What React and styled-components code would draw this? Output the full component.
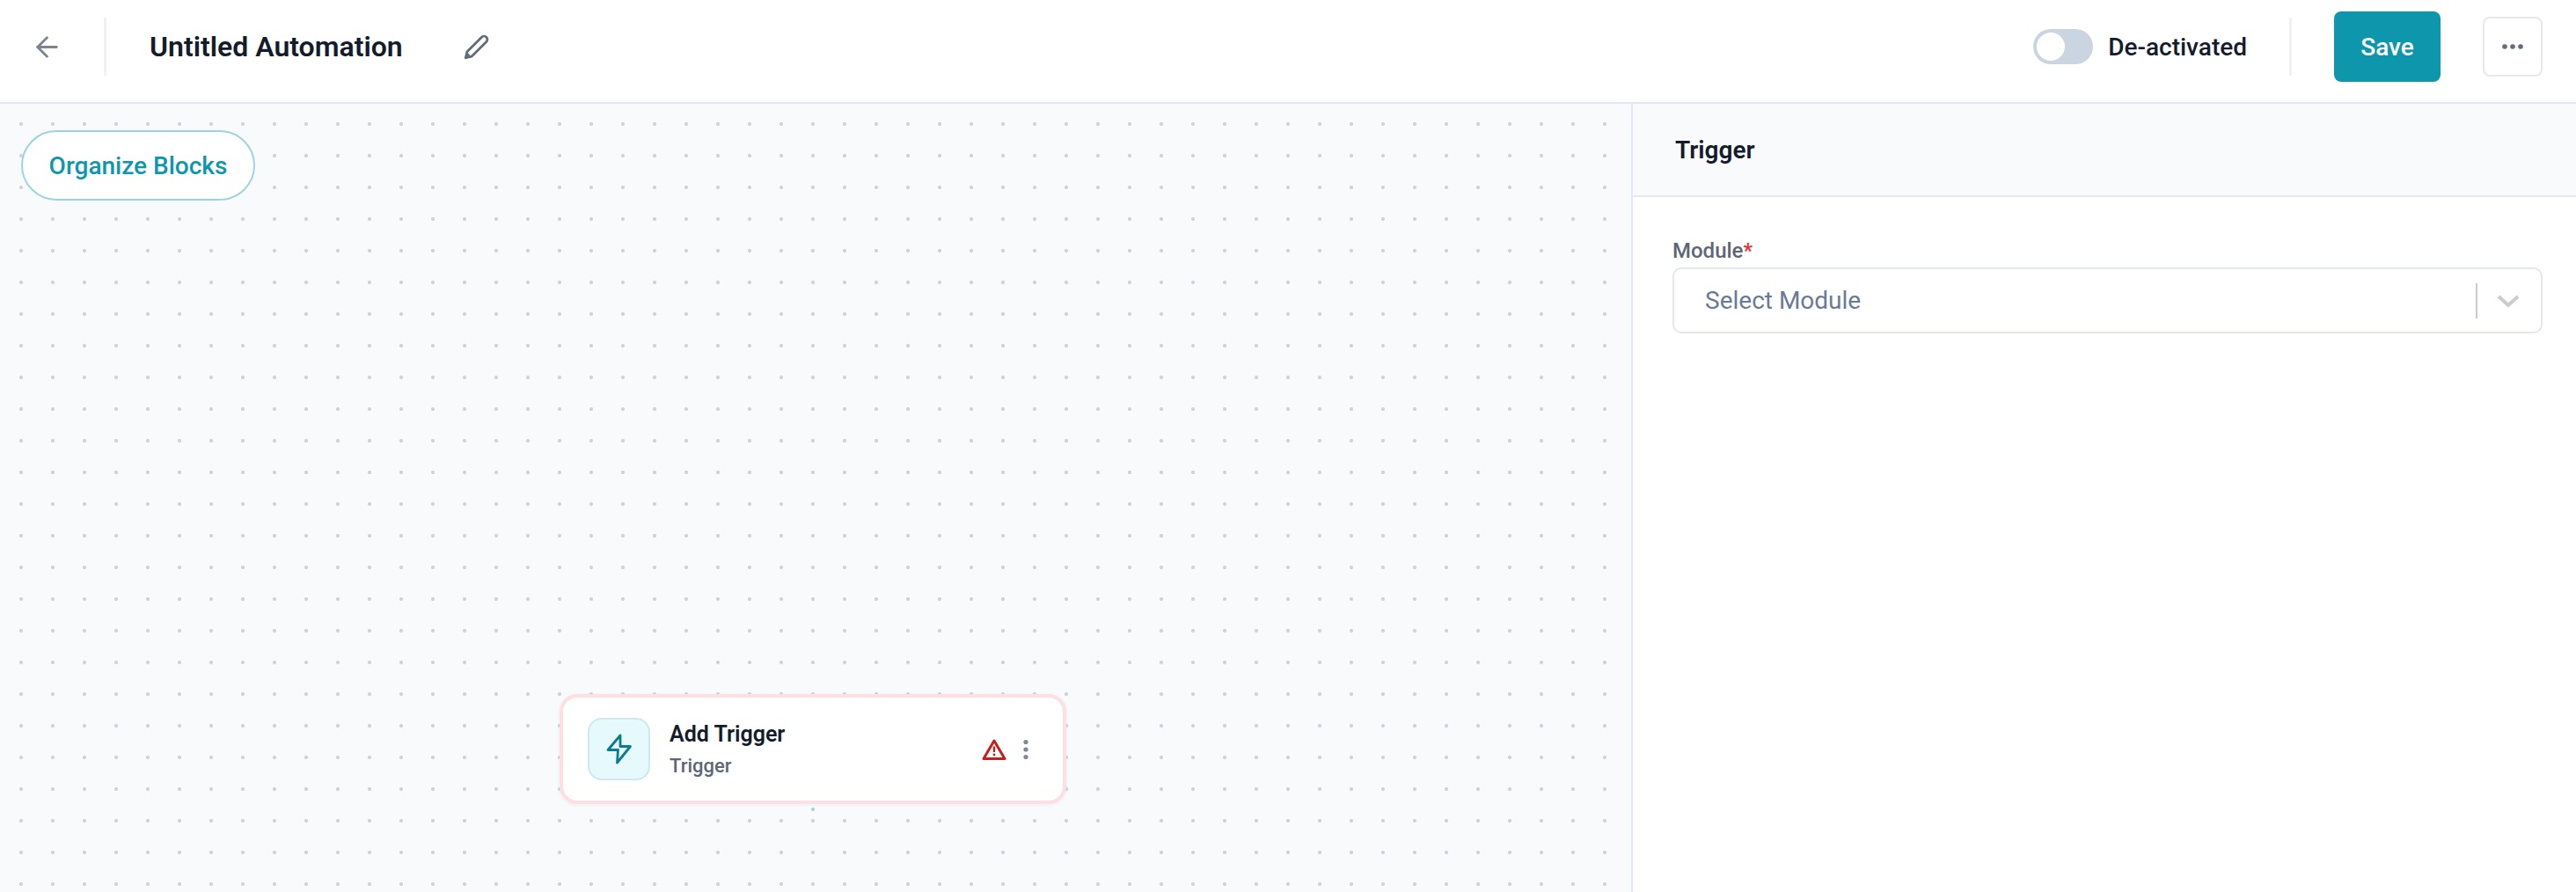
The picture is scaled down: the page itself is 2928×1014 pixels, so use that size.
import React from 'react';
import styled, { createGlobalStyle } from 'styled-components';
import { ArrowLeft } from 'lucide-react';

const GlobalStyle = createGlobalStyle`
  html, body {
    margin: 0;
    padding: 0;
    background: #fff;
  }
  body {
    font-family: Roboto, "Liberation Sans", sans-serif;
    color: #141c2c;
  }
  * { box-sizing: border-box; }
`;

const Page = styled.div`
  width: 2928px;
  height: 1014px;
  display: flex;
  flex-direction: column;
  overflow: hidden;
`;

const TopBar = styled.header`
  height: 118px;
  flex: none;
  display: flex;
  align-items: center;
  border-bottom: 2px solid #e1e9f7;
  padding-bottom: 10px;
`;

const BackButton = styled.button`
  width: 118px;
  height: 66px;
  display: flex;
  align-items: center;
  padding: 0 0 0 35px;
  border: 0;
  background: none;
  color: #7d8491;
`;

const Divider = styled.span`
  width: 3px;
  height: 66px;
  flex: none;
  background: #f0f1f3;
`;

const Title = styled.h1`
  margin: 0 0 0 49px;
  font-size: 32px;
  font-weight: 600;
  line-height: 40px;
  color: #141c2c;
`;

const EditIcon = styled.svg`
  width: 34px;
  height: 34px;
  margin-left: 67px;
  color: #626b7a;
`;

const Actions = styled.div`
  margin-left: auto;
  display: flex;
  align-items: center;
  padding-right: 38px;
`;

const Toggle = styled.span`
  width: 68px;
  height: 40px;
  padding: 4px;
  border-radius: 20px;
  background: #cbd5e1;
  display: flex;
`;

const Knob = styled.span`
  width: 32px;
  height: 32px;
  border-radius: 50%;
  background: #fff;
`;

const ToggleLabel = styled.span`
  margin: 0 48px 0 17px;
  font-size: 28px;
  font-weight: 500;
  color: #141c2c;
`;

const SaveButton = styled.button`
  width: 121px;
  height: 80px;
  margin: 0 48px;
  border: 0;
  border-radius: 8px;
  background: #0e96ad;
  color: #fff;
  font-family: inherit;
  font-size: 28px;
  font-weight: 500;
`;

const MoreButton = styled.button`
  width: 68px;
  height: 68px;
  display: flex;
  align-items: center;
  justify-content: center;
  padding: 0;
  border: 2px solid #e7e8ea;
  border-radius: 8px;
  background: #fff;
  color: #636c7b;
`;

const Body = styled.div`
  flex: 1;
  display: flex;
  min-height: 0;
`;

const Canvas = styled.main`
  position: relative;
  width: 1856px;
  flex: none;
  border-right: 2px solid #e1e9f7;
  background-color: #f9fafc;
  background-image: radial-gradient(circle, #d0d2dc 1.8px, transparent 2.4px);
  background-size: 36px 36px;
  background-position: 6px 5px;
`;

const OrganizeButton = styled.button`
  position: absolute;
  left: 24px;
  top: 30px;
  width: 266px;
  height: 80px;
  border: 2px solid #9dd4e0;
  border-radius: 40px;
  background: #fff;
  color: #0e96ad;
  font-family: inherit;
  font-size: 28px;
  font-weight: 500;
`;

const Node = styled.div`
  position: absolute;
  left: 636px;
  top: 671px;
  width: 576px;
  height: 125px;
  display: flex;
  align-items: center;
  padding: 0 39px 0 28px;
  border: 4px solid #fddfe4;
  border-radius: 20px;
  background: #fff;
  box-shadow: 0 1px 4px rgba(20, 28, 44, 0.06);
`;

const NodeIcon = styled.span`
  width: 71px;
  height: 71px;
  flex: none;
  display: flex;
  align-items: center;
  justify-content: center;
  border: 2px solid #cbe9ef;
  border-radius: 16px;
  background: #e6f9fd;
  color: #0a7c8f;
`;

const NodeText = styled.div`
  flex: 1;
  margin-left: 22px;
  display: flex;
  flex-direction: column;
  gap: 5px;
`;

const NodeTitle = styled.span`
  font-size: 25px;
  font-weight: 600;
  line-height: 34px;
  color: #141c2c;
`;

const NodeSub = styled.span`
  font-size: 22px;
  font-weight: 500;
  line-height: 28px;
  color: #5c6675;
`;

const WarnIcon = styled.svg`
  width: 28px;
  height: 26px;
  color: #c81e1e;
`;

const NodeMenu = styled.svg`
  width: 6px;
  height: 24px;
  margin-left: 19px;
  color: #7d8799;
`;

const Handle = styled.span`
  position: absolute;
  left: 922px;
  top: 800px;
  width: 4px;
  height: 4px;
  border-radius: 50%;
  background: #9dd4e0;
`;

const Panel = styled.aside`
  flex: 1;
  display: flex;
  flex-direction: column;
  background: #fff;
`;

const PanelHeader = styled.div`
  height: 106px;
  display: flex;
  align-items: center;
  padding-left: 48px;
  border-bottom: 2px solid #e7e8ea;
  background: #f9fafc;
  font-size: 28px;
  font-weight: 600;
  color: #141c2c;
`;

const PanelBody = styled.div`
  padding: 46px 38px 0 45px;
`;

const Label = styled.label`
  display: block;
  padding-bottom: 4px;
  font-size: 24px;
  font-weight: 500;
  line-height: 30px;
  color: #5c6675;
`;

const Required = styled.span`
  color: #ef2b2b;
`;

const Select = styled.div`
  height: 75px;
  display: flex;
  align-items: center;
  padding: 0 24px 0 35px;
  border: 2px solid #e5e7ea;
  border-radius: 10px;
  background: #fff;
`;

const Placeholder = styled.span`
  flex: 1;
  font-size: 28px;
  color: #6b7a94;
`;

const SelectSep = styled.span`
  width: 2px;
  height: 40px;
  margin-right: 22px;
  background: #cccccc;
`;

const Chevron = styled.svg`
  width: 26px;
  height: 14px;
  color: #cccccc;
`;

export default function App() {
  return (
    <Page>
      <GlobalStyle />
      <TopBar>
        <BackButton>
          <ArrowLeft size={37} strokeWidth={1.8} />
        </BackButton>
        <Divider />
        <Title>Untitled Automation</Title>
        <EditIcon viewBox="0 0 32 32" fill="none">
          <path
            d="M4 28l1.6-6.6L21.2 5.8a3.5 3.5 0 0 1 5 5L10.6 26.4 4 28z"
            stroke="currentColor"
            strokeWidth="2.6"
            strokeLinejoin="round"
          />
          <path d="M3 29l2-7.5 5.5 5.5z" fill="currentColor" />
        </EditIcon>
        <Actions>
          <Toggle>
            <Knob />
          </Toggle>
          <ToggleLabel>De-activated</ToggleLabel>
          <Divider />
          <SaveButton>Save</SaveButton>
          <MoreButton>
            <svg width="24" height="6" viewBox="0 0 24 6" fill="currentColor">
              <circle cx="3" cy="3" r="2.8" />
              <circle cx="12" cy="3" r="2.8" />
              <circle cx="21" cy="3" r="2.8" />
            </svg>
          </MoreButton>
        </Actions>
      </TopBar>
      <Body>
        <Canvas>
          <OrganizeButton>Organize Blocks</OrganizeButton>
          <Node>
            <NodeIcon>
              <svg width="30" height="35" viewBox="0 0 30 35" fill="none">
                <path
                  d="M16 2L2 18.5h11.5L12.5 33 27.5 14.5H16z"
                  stroke="currentColor"
                  strokeWidth="2.8"
                  strokeLinejoin="round"
                />
              </svg>
            </NodeIcon>
            <NodeText>
              <NodeTitle>Add Trigger</NodeTitle>
              <NodeSub>Trigger</NodeSub>
            </NodeText>
            <WarnIcon viewBox="0 0 28 26" fill="none">
              <path
                d="M14 3L26 23.5H2z"
                stroke="currentColor"
                strokeWidth="3"
                strokeLinejoin="round"
              />
              <path d="M14 9.5v6.5" stroke="currentColor" strokeWidth="2.4" />
              <circle cx="14" cy="19" r="1.4" fill="currentColor" />
            </WarnIcon>
            <NodeMenu viewBox="0 0 6 24" fill="currentColor">
              <circle cx="3" cy="3.5" r="2.6" />
              <circle cx="3" cy="12" r="2.6" />
              <circle cx="3" cy="20.5" r="2.6" />
            </NodeMenu>
          </Node>
          <Handle />
        </Canvas>
        <Panel>
          <PanelHeader>Trigger</PanelHeader>
          <PanelBody>
            <Label>
              Module<Required>*</Required>
            </Label>
            <Select>
              <Placeholder>Select Module</Placeholder>
              <SelectSep />
              <Chevron viewBox="0 0 26 14" fill="none">
                <path d="M2 2l11 10L24 2" stroke="currentColor" strokeWidth="4" />
              </Chevron>
            </Select>
          </PanelBody>
        </Panel>
      </Body>
    </Page>
  );
}
